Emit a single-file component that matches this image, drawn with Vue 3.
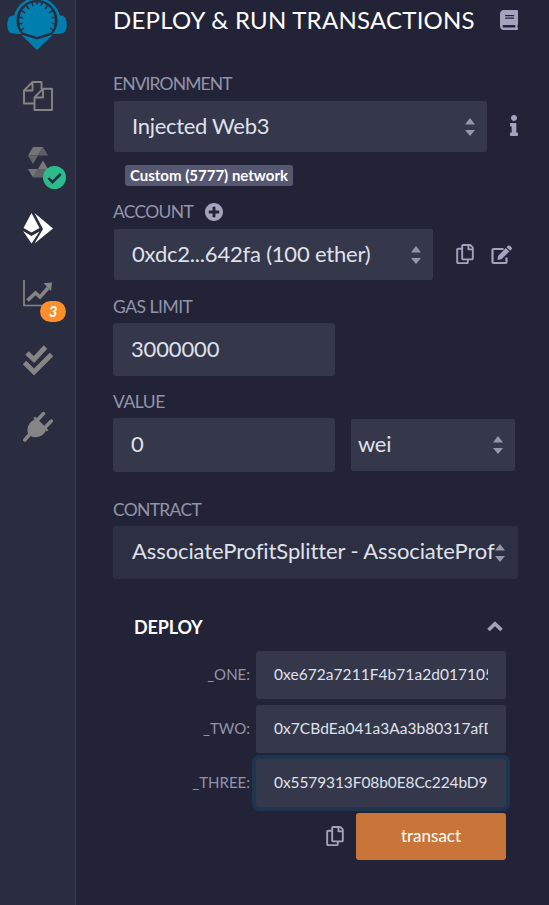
<script setup>
import { ref } from 'vue'

const args = ref([
  { name: '_ONE:', value: '0xe672a7211F4b71a2d017105' },
  { name: '_TWO:', value: '0x7CBdEa041a3Aa3b80317afD' },
  { name: '_THREE:', value: '0x5579313F08b0E8Cc224bD9', focused: true },
])

const copyPath =
  'M433.941 65.941l-51.882-51.882A48 48 0 0 0 348.118 0H176c-26.51 0-48 21.49-48 48v48H48c-26.51 0-48 21.49-48 48v320c0 26.51 21.49 48 48 48h224c26.51 0 48-21.49 48-48v-48h80c26.51 0 48-21.49 48-48V99.882a48 48 0 0 0-14.059-33.941zM266 464H54a6 6 0 0 1-6-6V150a6 6 0 0 1 6-6h74v224c0 26.51 21.49 48 48 48h96v42a6 6 0 0 1-6 6zm128-96H182a6 6 0 0 1-6-6V54a6 6 0 0 1 6-6h106v88c0 13.255 10.745 24 24 24h88v202a6 6 0 0 1-6 6zm6-256h-64V48h9.632c1.591 0 3.117.632 4.243 1.757l48.368 48.368a6 6 0 0 1 1.757 4.243V112z'
</script>

<template>
  <div class="app">
    <nav class="sidebar">
      <div class="logo">
        <svg width="64" height="51" viewBox="0 0 64 51">
          <path d="M12 15.500Q5.500 14.500 2.800 17.500Q-.5 25 2.800 31.500Q5.500 34.500 13.500 33.500zM50 15.500Q56.500 14.500 59.200 17.500Q62.500 25 59.200 31.500Q56.500 34.500 48.500 33.500z" fill="#007fae" />
          <circle cx="31" cy="21" r="23.500" fill="#007fae" />
          <path d="M0 34H62V51H0z" fill="#2a2c3f" />
          <circle cx="31" cy="20.500" r="20.600" fill="#2a2c3f" />
          <path d="M31 2.300C20 2.300 13.300 11 13.300 20.500C13.300 25.500 14.500 29.500 16.800 32.500L31 37L45.200 32.500C47.500 29.500 48.700 25.500 48.700 20.500C48.700 11 42 2.300 31 2.300z" fill="#007fae" />
          <path d="M12.500 17l4.300 1M12.800 24l3.700-.8M14.500 30.500l3.500-2.500M15.500 10.500l3.500 2.500M20.500 5.500l2.300 3.500M26 2.500l1 3.500M31 1v3.500M49.500 17l-4.300 1M49.200 24l-3.700-.8M47.500 30.500l-3.500-2.500M46.500 10.500l-3.500 2.500M41.500 5.500l-2.300 3.500M36 2.500l-1 3.500" stroke="#2a2c3f" stroke-width="1.500" />
          <path d="M15 34.500L31 39.500L47 34.500L31 50z" fill="#007fae" />
        </svg>
      </div>

      <div class="slot">
        <svg width="30" height="30" viewBox="0 0 30 30" fill="none" stroke="#858585" stroke-width="1.900" stroke-linejoin="round">
          <path d="M11 22.500H1V9.500L9.500 1H18.500V8M1 9.500H9.500V1" />
          <path d="M11.500 16.500L20 7.700H29V29H11.500zM11.500 16.500H20V7.700" />
        </svg>
      </div>

      <div class="slot">
        <svg width="30" height="31" viewBox="0 0 30 31">
          <path d="M10 0H20L15 8.500H5z" fill="#737475" />
          <path d="M20 0L25 8.500H15z" fill="#5d5f65" />
          <path d="M5 8.500H15L10 17z" fill="#626468" />
          <path d="M10 30.500H20L25 22H15z" fill="#606268" />
          <path d="M20 13.500L25 22H15z" fill="#777879" />
          <path d="M5 22H15L10 30.500z" fill="#74767a" />
        </svg>
        <span class="status-ok">
          <svg width="23" height="23" viewBox="0 0 23 23">
            <circle cx="11.500" cy="11.500" r="11.500" fill="#2cbb8b" />
            <path d="M5.400 12L9.500 16.200L17.700 8" fill="none" stroke="#25293b" stroke-width="2.500" />
          </svg>
        </span>
      </div>

      <div class="slot">
        <svg width="30" height="31" viewBox="0 0 30 31" fill="#fff">
          <path d="M8.500 0L16.500 15L8.500 19.500L.5 15z" />
          <path d="M0 18L8.500 23L16.500 18.500L8.500 30.500z" />
          <path d="M11.500 0L30 15.500L11.500 30.500L20 16z" />
        </svg>
      </div>

      <div class="slot">
        <svg width="30" height="28" viewBox="0 0 30 28">
          <path d="M1 0V25.500H30" fill="none" stroke="#858585" stroke-width="1.700" />
          <path d="M4.500 20.500L12.500 13L17 17L25 8" fill="none" stroke="#858585" stroke-width="3.600" />
          <path d="M20.500 3.300L29 2.500L28 11z" fill="#858585" />
        </svg>
        <span class="count">3</span>
      </div>

      <div class="slot">
        <svg width="30" height="30" viewBox="0 0 30 30" fill="none" stroke="#858585" stroke-width="4.900">
          <path d="M4 8L11 14.500L22.500 2" />
          <path d="M1.500 17.500L11 27L28.500 9.500" />
        </svg>
      </div>

      <div class="slot">
        <svg width="30" height="31" viewBox="0 0 30 31" fill="#858585" stroke="#858585" stroke-linecap="round">
          <path d="M1.800 29L7 23M14.500 9L20.500 2.500M22 16.500L28.300 10" stroke-width="3.500" />
          <path d="M12 5.500L25.500 19L24 20.500L22.500 19.500C22 24 14 28 8.500 25.500L5 22C3 17 7 9.500 11.500 9L10.500 7z" stroke="none" />
        </svg>
      </div>
    </nav>

    <main class="panel">
      <header class="title-row">
        <h1 class="title">DEPLOY &amp; RUN TRANSACTIONS</h1>
        <svg class="icon" width="18" height="20" viewBox="0 0 448 512" preserveAspectRatio="none">
          <path d="M448 360V24c0-13.300-10.700-24-24-24H96C43 0 0 43 0 96v320c0 53 43 96 96 96h328c13.300 0 24-10.700 24-24v-16c0-7.500-3.500-14.300-8.900-18.700-4.200-15.400-4.200-59.300 0-74.700 5.400-4.300 8.900-11.100 8.900-18.600zM128 134c0-3.300 2.700-6 6-6h212c3.300 0 6 2.700 6 6v20c0 3.300-2.700 6-6 6H134c-3.300 0-6-2.700-6-6v-20zm0 64c0-3.300 2.700-6 6-6h212c3.300 0 6 2.700 6 6v20c0 3.300-2.700 6-6 6H134c-3.300 0-6-2.700-6-6v-20zm253.400 250H96c-17.700 0-32-14.300-32-32 0-17.600 14.400-32 32-32h285.400c-1.900 17.100-1.900 46.900 0 64z" />
        </svg>
      </header>

      <div class="label env-label"><span class="t-env">ENVIRONMENT</span></div>
      <div class="row env-row">
        <div class="select env-select">
          <span class="t-injected">Injected Web3</span>
          <svg class="arrows" width="10" height="18" viewBox="0 0 10 18"><path d="M0 6.500L5 0L10 6.500zM0 12L5 18L10 12z" /></svg>
        </div>
        <svg class="icon info" width="8" height="21" viewBox="0 0 192 512" preserveAspectRatio="none">
          <path d="M20 424.229h20V279.771H20c-11.046 0-20-8.954-20-20V212c0-11.046 8.954-20 20-20h112c11.046 0 20 8.954 20 20v212.229h20c11.046 0 20 8.954 20 20V492c0 11.046-8.954 20-20 20H20c-11.046 0-20-8.954-20-20v-47.771c0-11.046 8.954-20 20-20zM96 0C56.235 0 24 32.235 24 72s32.235 72 72 72 72-32.235 72-72S135.764 0 96 0z" />
        </svg>
      </div>
      <div class="network"><span>Custom (5777) network</span></div>

      <div class="label account-label">
        <span>ACCOUNT</span>
        <svg class="icon" width="18" height="18" viewBox="8 8 496 496">
          <path d="M256 8C119 8 8 119 8 256s111 248 248 248 248-111 248-248S393 8 256 8zm144 276c0 6.600-5.400 12-12 12h-92v92c0 6.600-5.400 12-12 12h-56c-6.600 0-12-5.400-12-12v-92h-92c-6.600 0-12-5.400-12-12v-56c0-6.600 5.400-12 12-12h92v-92c0-6.600 5.400-12 12-12h56c6.600 0 12 5.400 12 12v92h92c6.600 0 12 5.400 12 12v56z" />
        </svg>
      </div>
      <div class="row account-row">
        <div class="select account-select">
          <span class="t-address">0xdc2...642fa (100 ether)</span>
          <svg class="arrows" width="10" height="18" viewBox="0 0 10 18"><path d="M0 6.500L5 0L10 6.500zM0 12L5 18L10 12z" /></svg>
        </div>
        <svg class="icon copy" width="18" height="20" viewBox="0 0 448 512"><path :d="copyPath" /></svg>
        <svg class="icon edit" width="22" height="20" viewBox="0 0 22 20">
          <path d="M12.500 4H2.500Q1.500 4 1.500 5V17Q1.500 18 2.500 18H14.500Q15.500 18 15.500 17V12.500" fill="none" stroke="#a2a3bd" stroke-width="2.200" />
          <path d="M14.800 3L18.300 6.500L10.500 14.300L6.500 15L7 11zM15.600 2.200L17 .8Q18 0 19 .8L20.600 2.400Q21.400 3.400 20.600 4.200L19.200 5.700z" />
        </svg>
      </div>

      <div class="label gas-label"><span class="t-gas">GAS LIMIT</span></div>
      <div class="input gas-input"><span class="t-limit">3000000</span></div>

      <div class="label value-label"><span class="t-value">VALUE</span></div>
      <div class="row value-row">
        <div class="input value-input"><span>0</span></div>
        <div class="select unit-select">
          <span class="t-wei">wei</span>
          <svg class="arrows" width="10" height="18" viewBox="0 0 10 18"><path d="M0 6.500L5 0L10 6.500zM0 12L5 18L10 12z" /></svg>
        </div>
      </div>

      <div class="label contract-label"><span>CONTRACT</span></div>
      <div class="select contract-select">
        <span class="t-splitter">AssociateProfitSplitter - AssociateProf</span>
        <svg class="arrows" width="10" height="18" viewBox="0 0 10 18"><path d="M0 6.500L5 0L10 6.500zM0 12L5 18L10 12z" /></svg>
      </div>

      <section class="deploy">
        <div class="deploy-head">
          <span>DEPLOY</span>
          <svg class="chevron" width="16" height="11" viewBox="0 0 16 11">
            <path d="M1.500 9L8 2.700L14.500 9" fill="none" stroke="#a2a3bd" stroke-width="3.600" />
          </svg>
        </div>
        <div v-for="(arg, i) in args" :key="arg.name" class="arg">
          <span class="arg-name">{{ arg.name }}</span>
          <div class="arg-input" :class="{ focused: arg.focused }">
            <span class="arg-value" :class="'value-' + i">{{ arg.value }}</span>
          </div>
        </div>
        <div class="actions">
          <svg class="icon" width="18" height="20" viewBox="0 0 448 512"><path :d="copyPath" /></svg>
          <button class="transact">transact</button>
        </div>
      </section>
    </main>
  </div>
</template>

<style>
body {
  background: #222336;
}
</style>

<style scoped>
.app,
.app * {
  box-sizing: border-box;
}
.app {
  display: flex;
  width: 549px;
  height: 905px;
  overflow: hidden;
  background: #222336;
  font-family: Lato, sans-serif;
  font-size: 22px;
  color: #dfe1ea;
  white-space: nowrap;
}
svg {
  display: block;
  flex: none;
}
.sidebar {
  flex: none;
  width: 76px;
  background: #2a2c3f;
  border-right: 1px solid #3c3e52;
}
.logo {
  height: 63px;
  padding-left: 6px;
}
.slot {
  position: relative;
  height: 66px;
  display: flex;
  align-items: center;
  justify-content: center;
}
.status-ok {
  position: absolute;
  left: 43px;
  top: 37px;
}
.count {
  position: absolute;
  left: 40px;
  top: 40px;
  width: 26px;
  height: 21px;
  border-radius: 10.500px;
  background: #fd8f2a;
  color: #fff;
  font-size: 15px;
  font-weight: 700;
  font-style: italic;
  line-height: 20px;
  text-align: center;
}
.panel {
  flex: 1;
  min-width: 0;
  padding-left: 37px;
}
.icon {
  fill: #a2a3bd;
}
.title-row {
  display: flex;
  align-items: center;
  justify-content: space-between;
  height: 40px;
  padding-right: 31px;
}
.title {
  margin: 0;
  font-size: 24px;
  font-weight: 400;
  line-height: 40px;
  letter-spacing: 0.24px;
  color: #fff;
}
.label {
  display: flex;
  align-items: center;
  gap: 12px;
  height: 20px;
  font-size: 17.500px;
  line-height: 20px;
  letter-spacing: -0.7px;
  color: #9294ab;
}
.t-env { letter-spacing: -0.9px; }
.t-gas,
.t-value { letter-spacing: -0.5px; }
.env-label { margin-top: 34px; }
.row {
  display: flex;
  align-items: center;
}
.select {
  display: flex;
  align-items: center;
  justify-content: space-between;
  background: #35374b;
  border-radius: 2px;
  height: 51px;
  padding: 0 12px 0 18px;
}
.select span,
.input span { padding-bottom: 2px; }
.t-injected { letter-spacing: -0.3px; }
.t-address { letter-spacing: -0.2px; }
.t-limit { letter-spacing: -0.15px; }
.t-wei { letter-spacing: -0.3px; }
.t-splitter { letter-spacing: -0.1px; }
.arrows {
  fill: #9496ac;
}
.env-row {
  margin: 7px 31px 0 1px;
  justify-content: space-between;
}
.env-select { width: 373px; }
.info { margin-bottom: 3px; }
.network {
  width: 168px;
  height: 21px;
  margin: 13px 0 0 12px;
  background: #565872;
  border-radius: 3px;
  color: #fff;
  font-size: 15px;
  font-weight: 700;
  line-height: 20px;
  text-align: center;
}
.account-label { margin-top: 16px; }
.account-row { margin: 7px 0 0 1px; }
.account-select { width: 319px; }
.copy {
  margin-left: 23px;
  margin-bottom: 2px;
}
.edit { margin-left: 17px; }
.gas-label { margin-top: 17px; }
.input {
  display: flex;
  align-items: center;
  width: 222px;
  padding-left: 18px;
  border-radius: 3px;
  background: #35374b;
}
.gas-input { height: 53px; margin-top: 6px; }
.value-label { margin-top: 16px; }
.value-row { margin-top: 6px; gap: 16px; }
.value-input { height: 54px; }
.unit-select {
  width: 164px;
  height: 52px;
  padding-left: 7px;
}
.contract-label { margin-top: 28px; }
.contract-select {
  width: 405px;
  height: 53px;
  margin-top: 6px;
  padding: 0 13px 0 19px;
  border-radius: 3px;
  background: #2d2f42;
}
.contract-select span,
.value-row span { padding-bottom: 4px; }
.contract-select .arrows { margin-left: -2px; }
.deploy {
  width: 393px;
  margin-top: 36px;
}
.deploy-head {
  display: flex;
  align-items: center;
  justify-content: space-between;
  height: 24px;
  margin-bottom: 12px;
  padding: 0 3px 0 21px;
  color: #fff;
  font-size: 18px;
  font-weight: 700;
  letter-spacing: -0.15px;
}
.chevron { margin-bottom: 2px; }
.arg {
  display: flex;
  align-items: center;
  justify-content: flex-end;
  gap: 6px;
  margin-bottom: 6px;
}
.arg-name {
  padding-bottom: 2px;
  color: #9294ab;
  font-size: 15px;
}
.arg-input {
  width: 250px;
  height: 48px;
  padding: 0 18px;
  border-radius: 3px;
  background: #35374b;
  font-size: 15.500px;
  line-height: 46px;
}
.arg-input.focused {
  box-shadow: 0 0 0 4px #1d354e;
}
.arg-value {
  display: block;
  overflow: hidden;
}
.value-0 { letter-spacing: 0.05px; }
.value-1 { letter-spacing: 0.04px; }
.value-2 { letter-spacing: -0.1px; }
.actions {
  display: flex;
  align-items: center;
  justify-content: flex-end;
  gap: 12px;
}
.actions .icon { margin-bottom: 2px; }
.transact {
  width: 150px;
  height: 47px;
  padding: 0 0 2px;
  border: 0;
  border-radius: 3px;
  background: #c97539;
  color: #fff;
  font: 17px Lato, sans-serif;
}
</style>
